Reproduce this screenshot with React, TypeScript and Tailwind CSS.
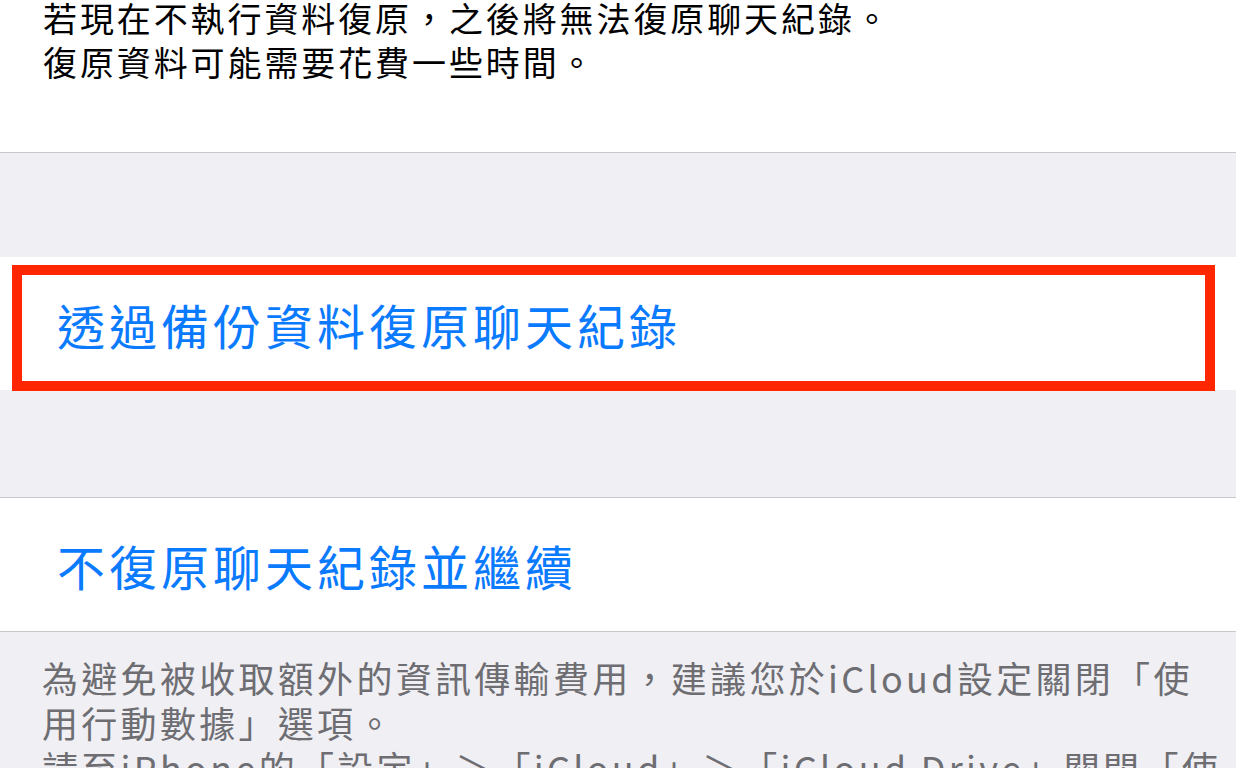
const FONT = { fontFamily: '"Noto Sans CJK TC", "Noto Sans", sans-serif' };

export default function App() {
  return (
    <div className="w-[1236px] h-[768px] overflow-hidden bg-[#efeff4]" style={FONT}>
      {/* 說明文字 */}
      <div className="h-[153px] bg-white border-b border-[#c8c7cc] overflow-hidden pl-[43px]">
        <p className="-mt-[4px] text-[34px] leading-[44px] tracking-[2.9px] text-black whitespace-nowrap">
          若現在不執行資料復原，之後將無法復原聊天紀錄。
          <br />
          復原資料可能需要花費一些時間。
        </p>
      </div>

      <div className="h-[104px]" />

      {/* 透過備份復原 */}
      <div className="relative h-[133px] bg-white flex items-center pl-[57px]">
        <span className="text-[48px] tracking-[4px] text-[#0a7aff] whitespace-nowrap">透過備份資料復原聊天紀錄</span>
        <div className="absolute left-[12px] top-[8px] w-[1203px] h-[126px] border-[10px] border-[#ff2600]" />
      </div>

      <div className="h-[108px] border-b border-[#c8c7cc]" />

      {/* 不復原 */}
      <div className="h-[134px] bg-white border-b border-[#c8c7cc] flex items-center pl-[57px]">
        <span className="text-[48px] tracking-[4px] text-[#0a7aff] whitespace-nowrap">不復原聊天紀錄並繼續</span>
      </div>

      {/* 注意事項 */}
      <div className="pl-[42px] pt-[23px]">
        <p className="text-[36px] leading-[45px] tracking-[3.3px] text-[#6d6d72] whitespace-nowrap">
          為避免被收取額外的資訊傳輸費用，建議您於iCloud設定關閉「使
          <br />
          用行動數據」選項。
          <br />
          請至iPhone的「設定」＞「iCloud」＞「iCloud Drive」關閉「使
        </p>
      </div>
    </div>
  );
}
